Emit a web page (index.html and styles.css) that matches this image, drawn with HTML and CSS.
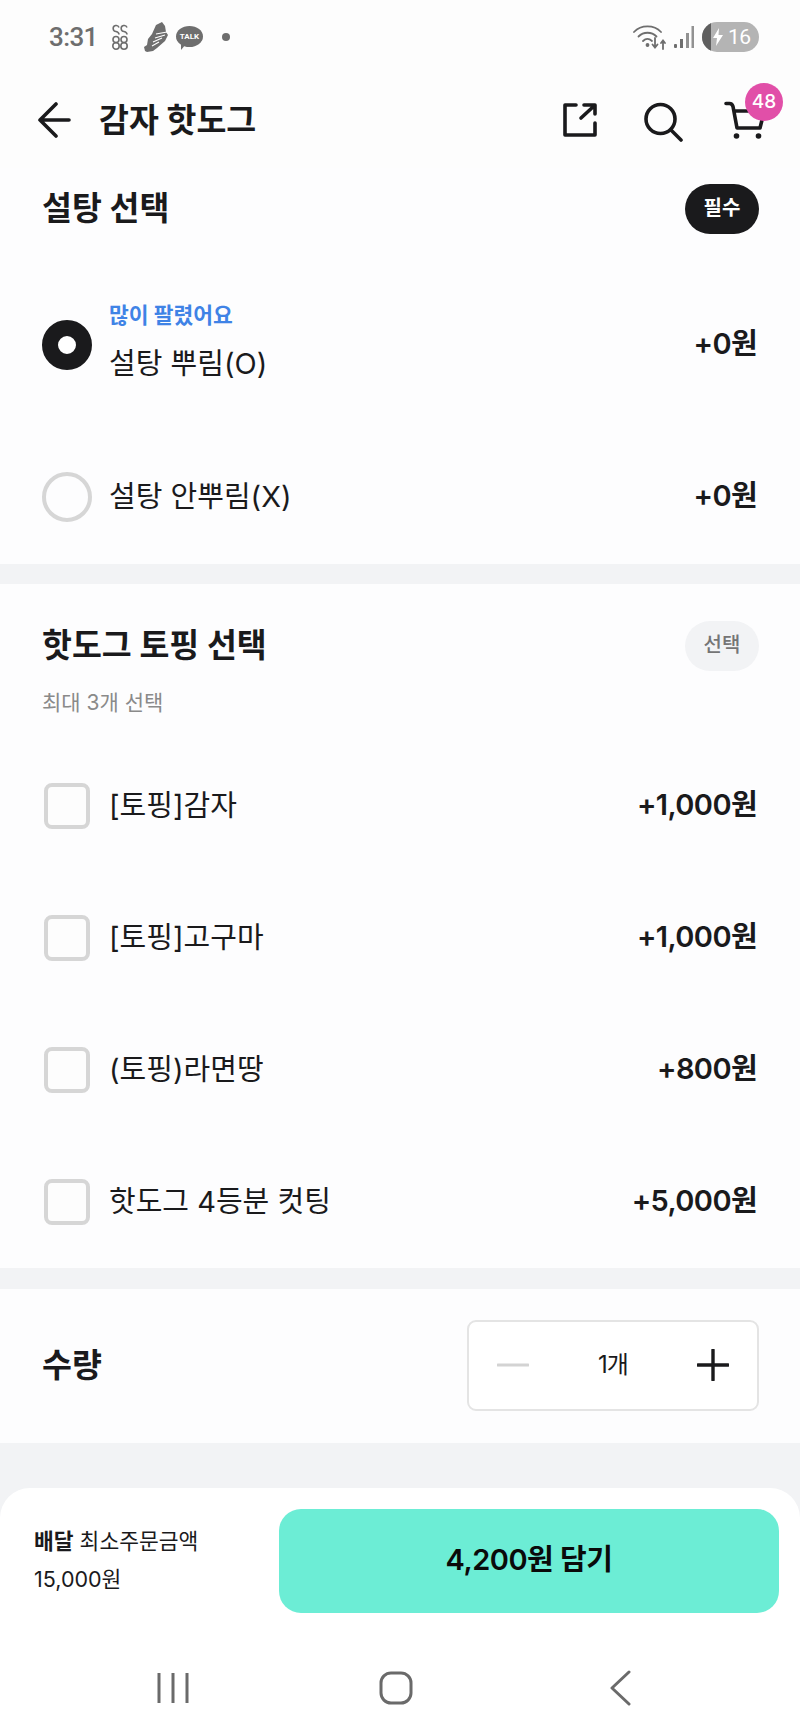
FILE: index.html
```html
<!DOCTYPE html>
<html lang="ko">
<head>
<meta charset="utf-8">
<title>감자 핫도그</title>
<link rel="stylesheet" href="styles.css">
</head>
<body>
<div class="page">
  <div class="status">
    <div class="status-left">
      <span class="time">3:31</span>
      <svg class="ic-88" width="16" height="26" viewBox="0 0 16 26" fill="none" stroke="#6e6e6e" stroke-width="1.6"><path d="M7 3.500A3 3 0 1 0 4 7.500c2 .5 3 1.500 3 3"/><path d="M15 3.500A3 3 0 1 0 12 7.500c2 .5 3 1.500 3 3"/><circle cx="4" cy="15.500" r="3"/><circle cx="12" cy="15.500" r="3"/><circle cx="4" cy="22" r="3.200"/><circle cx="12" cy="22" r="3.200"/></svg>
      <svg class="ic-shoe" width="24" height="30" viewBox="0 0 24 30"><path d="M12 3l6-3 3 4 1 6 2 3-3 6-8 7-4 3-6 1-2-1-1-4 3-2 1-6 4-5z" fill="#6e6e6e"/><path d="M12 12l11-2M11 16l10-3M9 20l9-4M8 24l7-4" stroke="#fff" stroke-width="1.100" fill="none"/></svg>
      <span class="talk">TALK</span>
      <span class="dot"></span>
    </div>
    <div class="status-right">
      <svg width="34" height="26" viewBox="0 0 34 26" fill="none" stroke="#6e6e6e" stroke-width="1.800" stroke-linecap="round"><path d="M1 8C8 .5 21 .5 28 8"/><path d="M5.500 12.500c5-5 13-5 18 0"/><path d="M10 17c2.800-2.800 6-2.800 9 0"/><circle cx="14.500" cy="21" r="1" fill="#6e6e6e"/><path d="M22 14v9M19.500 20.500l2.500 3 2.500-3"/><path d="M30 25v-8M28 19l2-2.500 2 2.500"/></svg>
      <svg width="22" height="24" viewBox="0 0 22 24" fill="#6e6e6e"><rect x="1" y="19" width="3" height="4" rx="1"/><rect x="7" y="14" width="3" height="9"/><rect x="13" y="8" width="3" height="15" opacity=".75"/><rect x="18.500" y="1" width="2.500" height="22" opacity=".75"/></svg>
      <div class="battery"><span class="battery-fill"></span><svg class="bolt" width="12" height="18" viewBox="0 0 12 18"><path d="M7 0L1 10h4l-1 8 7-11H6.500z" fill="#fff"/></svg><span class="battery-num">16</span></div>
    </div>
  </div>

  <header class="topbar">
    <div class="topbar-left">
      <svg width="34" height="36" viewBox="0 0 34 36" fill="none" stroke="#1a1a1c" stroke-width="3.600" stroke-linecap="round" stroke-linejoin="round"><path d="M3 18h29M19 2L3 18l16 16"/></svg>
      <h1 class="title">감자 핫도그</h1>
    </div>
    <div class="topbar-icons">
      <svg class="ic-share" width="34" height="34" viewBox="0 0 34 34" fill="none" stroke="#1a1a1c" stroke-width="3.600" stroke-linecap="round" stroke-linejoin="round"><path d="M13 2H2v30h30V20"/><path d="M18 15L31 3M21 2h11v9"/></svg>
      <svg class="ic-search" width="40" height="40" viewBox="0 0 40 40" fill="none" stroke="#1a1a1c" stroke-width="3.600" stroke-linecap="round"><circle cx="17.500" cy="17" r="14.500"/><path d="M28 28l10 10"/></svg>
      <div class="cart">
        <svg width="42" height="42" viewBox="0 0 42 42" fill="none" stroke="#1a1a1c" stroke-width="3.600" stroke-linecap="round" stroke-linejoin="round"><path d="M2 2.500h3.500c2 0 3 1.200 3.500 3L13 27h23l3-12M10 10h28"/><circle cx="12.500" cy="35" r="2.800" fill="#1a1a1c" stroke="none"/><circle cx="34.500" cy="35" r="2.800" fill="#1a1a1c" stroke="none"/></svg>
        <span class="cart-badge">48</span>
      </div>
    </div>
  </header>

  <section class="group group-sugar">
    <div class="group-head">
      <h2 class="group-title">설탕 선택</h2>
      <span class="pill pill-req">필수</span>
    </div>
    <div class="rows rows-radio">
      <div class="row">
        <span class="radio radio-on"></span>
        <div class="row-text">
          <span class="tag">많이 팔렸어요</span>
          <span class="name">설탕 뿌림(O)</span>
        </div>
        <span class="price">+0원</span>
      </div>
      <div class="row">
        <span class="radio"></span>
        <div class="row-text"><span class="name">설탕 안뿌림(X)</span></div>
        <span class="price">+0원</span>
      </div>
    </div>
  </section>

  <section class="group group-topping">
    <div class="group-head group-head-sm">
      <h2 class="group-title">핫도그 토핑 선택</h2>
      <span class="pill pill-opt">선택</span>
    </div>
    <p class="hint">최대 3개 선택</p>
    <div class="rows">
      <div class="row"><span class="check"></span><div class="row-text"><span class="name">[토핑]감자</span></div><span class="price">+1,000원</span></div>
      <div class="row"><span class="check"></span><div class="row-text"><span class="name">[토핑]고구마</span></div><span class="price">+1,000원</span></div>
      <div class="row"><span class="check"></span><div class="row-text"><span class="name">(토핑)라면땅</span></div><span class="price">+800원</span></div>
      <div class="row"><span class="check"></span><div class="row-text"><span class="name">핫도그 4등분 컷팅</span></div><span class="price">+5,000원</span></div>
    </div>
  </section>

  <section class="group group-qty">
    <h2 class="group-title">수량</h2>
    <div class="stepper">
      <svg width="32" height="32" viewBox="0 0 32 32"><path d="M1 16h30" stroke="#d3d3d3" stroke-width="3" stroke-linecap="round"/></svg>
      <span class="qty">1개</span>
      <svg width="32" height="32" viewBox="0 0 32 32" fill="none" stroke="#1a1a1c" stroke-width="3.400" stroke-linecap="round"><path d="M1 16h30M16 1v30"/></svg>
    </div>
  </section>

  <div class="spacer"></div>

  <footer class="sheet">
    <div class="cta-row">
      <div class="min-order">
        <span class="min-label"><b>배달</b> 최소주문금액</span>
        <span class="min-value">15,000원</span>
      </div>
      <div class="cta">4,200원 담기</div>
    </div>
    <nav class="sysnav">
      <svg width="32" height="32" viewBox="0 0 32 32" stroke="#6a6a6a" stroke-width="3"><path d="M2 1v30M16 1v30M30 1v30"/></svg>
      <svg width="34" height="34" viewBox="0 0 34 34" fill="none" stroke="#6a6a6a" stroke-width="3"><rect x="2" y="2" width="30" height="30" rx="10"/></svg>
      <svg class="nav-back" width="22" height="36" viewBox="0 0 22 36" fill="none" stroke="#6a6a6a" stroke-width="3" stroke-linecap="round" stroke-linejoin="round"><path d="M20 2L3 18l17 16"/></svg>
    </nav>
  </footer>
</div>
</body>
</html>
```

FILE: styles.css
```css
* { box-sizing: border-box; margin: 0; padding: 0; }
html, body { background: #f2f3f5; }
body {
  width: 800px;
  height: 1734px;
  overflow: hidden;
  font-family: Inter, "Noto Sans CJK KR", "Noto Sans", sans-serif;
  color: #1a1a1c;
}
.page { display: flex; flex-direction: column; height: 1734px; }
.page > * { flex: none; }

.status {
  height: 72px;
  background: #fdfdfd;
  display: flex;
  align-items: center;
  justify-content: space-between;
  padding: 2px 41px 0 49px;
  color: #6e6e6e;
}
.status-left, .status-right { display: flex; align-items: center; }
.time { font-family: Roboto, sans-serif; font-size: 26px; font-weight: 500; letter-spacing: -.6px; color: #6e6e6e; width: 63px; }
.ic-88 { margin-right: 16px; }
.ic-shoe { margin-right: 8px; }
.talk {
  position: relative;
  width: 27px; height: 21px;
  margin-right: 19px;
  margin-bottom: 1px;
  border-radius: 50%;
  background: #6e6e6e;
  color: #fff;
  font-family: Roboto, sans-serif;
  font-size: 8px;
  font-weight: 700;
  line-height: 21px;
  text-align: center;
}
.talk::after {
  content: "";
  position: absolute;
  left: 5px; top: 18px;
  border-left: 5px solid #6e6e6e;
  border-right: 3px solid transparent;
  border-bottom: 6px solid transparent;
}
.dot { width: 8px; height: 8px; border-radius: 50%; background: #6e6e6e; }
.status-right { gap: 6px; }
.battery {
  position: relative;
  width: 57px; height: 30px;
  border-radius: 15px;
  background: #b4b4b4;
  overflow: hidden;
  display: flex;
  align-items: center;
  padding-left: 10px;
  margin-left: 1px;
}
.battery-fill { position: absolute; left: 0; top: 0; bottom: 0; width: 9px; background: #5f5f5f; }
.bolt { position: relative; margin-right: 4px; }
.battery-num { font-family: Roboto, sans-serif; font-size: 21px; letter-spacing: -.5px; line-height: 30px; color: #fff; }

.topbar {
  height: 96px;
  background: #fdfdfd;
  display: flex;
  align-items: center;
  justify-content: space-between;
  padding: 0 34px 0 37px;
}
.topbar-left { display: flex; align-items: center; gap: 28px; }
.title { font-size: 32.500px; font-weight: 700; line-height: 40px; padding-top: 2px; }
.topbar-icons { display: flex; align-items: center; }
.ic-share { margin-right: 46px; }
.ic-search { margin-right: 41px; margin-top: 4px; }
.cart { position: relative; width: 42px; height: 42px; margin-top: 4px; }
.cart-badge {
  position: absolute;
  left: 21px; top: -18px;
  width: 38px; height: 38px;
  border-radius: 50%;
  background: #e14fa8;
  color: #fff;
  font-size: 19px;
  font-weight: 500;
  line-height: 38px;
  text-align: center;
}

.group { background: #fdfdfe; padding: 0 41px 0 42px; }
.group-sugar { height: 396px; }
.group-topping { height: 684px; margin-top: 20px; }
.group-qty {
  height: 154px;
  margin-top: 21px;
  display: flex;
  align-items: center;
  justify-content: space-between;
}
.group-head { height: 80px; padding-top: 2px; display: flex; align-items: center; justify-content: space-between; }
.group-head-sm { height: 122px; }
.group-title { font-size: 32.500px; font-weight: 700; line-height: 44px; }
.pill {
  width: 74px; height: 50px;
  border-radius: 25px;
  font-size: 20px;
  font-weight: 700;
  line-height: 48px;
  text-align: center;
}
.pill-req { background: #1a1a1c; color: #fff; }
.pill-opt { background: #f2f3f5; color: #757575; font-weight: 500; }
.hint { font-size: 21px; line-height: 30px; color: #8a8a8a; height: 34px; margin-top: -18px; margin-bottom: 18px; }

.rows { display: flex; flex-direction: column; }
.rows-radio { gap: 20px; padding-top: 31px; }
.row { height: 132px; display: flex; align-items: center; }
.radio {
  flex: none;
  width: 50px; height: 50px;
  border-radius: 50%;
  border: 4px solid #d6d6d6;
}
.radio-on { border: 16px solid #1a1a1c; background: #fff; }
.check {
  flex: none;
  width: 46px; height: 46px;
  margin-left: 2px;
  border-radius: 8px;
  border: 4px solid #d6d6d6;
  background: #fdfdfd;
}
.row-text { flex: 1; display: flex; flex-direction: column; margin-left: 17px; }
.check + .row-text { margin-left: 19px; }
.tag { font-size: 21.500px; font-weight: 700; line-height: 30px; color: #3f83e6; margin-bottom: 14px; margin-top: -6px; }
.name { font-size: 29px; font-weight: 400; line-height: 40px; }
.price { font-size: 29px; font-weight: 600; line-height: 40px; margin-top: -2px; margin-right: 2px; letter-spacing: -.6px; }

.stepper {
  width: 292px; height: 91px;
  margin-bottom: 2px;
  border: 2px solid #e4e4e4;
  border-radius: 9px;
  background: #fff;
  display: flex;
  align-items: center;
  justify-content: space-between;
  padding: 0 28px;
}
.qty { font-size: 24px; line-height: 30px; letter-spacing: -1px; }

.spacer { height: 45px; }
.sheet {
  height: 246px;
  background: #fff;
  border-radius: 30px 30px 0 0;
}
.cta-row {
  display: flex;
  justify-content: space-between;
  padding: 21px 21px 0 34px;
}
.min-order { display: flex; flex-direction: column; justify-content: center; padding-bottom: 3px; }
.min-label { font-size: 21.500px; line-height: 36px; }
.min-label b { font-weight: 700; }
.min-value { font-size: 21.500px; line-height: 36px; margin-top: 2px; }
.cta {
  width: 500px; height: 104px;
  border-radius: 22px;
  background: #6cedd5;
  color: #0a0a0a;
  font-size: 29px;
  font-weight: 600;
  letter-spacing: -.5px;
  line-height: 102px;
  text-align: center;
}
.sysnav {
  height: 121px;
  padding: 29px 0 0 157px;
  display: flex;
  align-items: center;
  gap: 190px;
}
.nav-back { margin-left: 6px; }
```
